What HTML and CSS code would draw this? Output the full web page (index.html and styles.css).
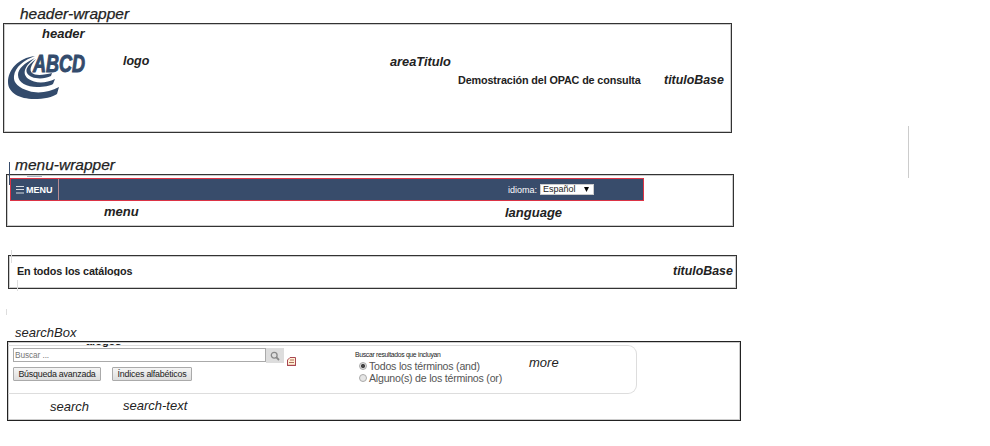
FILE: index.html
```
<!DOCTYPE html>
<html lang="es">
<head>
<meta charset="utf-8">
<title>OPAC</title>
<link rel="stylesheet" href="styles.css">
</head>
<body>
<main class="page">
  <section class="header-section">
    <h2 class="section-label header-wrapper-label">header-wrapper</h2>
    <div class="frame header-frame">
      <span class="note note-header">header</span>
      <div class="header-row">
        <svg class="brand" width="79" height="46" viewBox="0 0 79 46">
          <g fill="#334b6c">
            <path d="M27 1C10 3 0 15 0 27c0 11 12 17 26 17 10 0 19-2 23-5l2-7c-9 5-21 7-30 4C11 33 5 28 6 21 7 12 16 5 27 1Z"/>
            <path d="M27 3C16 8 10 14 10 20c0 8 9 12 19 12 7 0 13-1 16-3l2-5c-7 3.500-15 4.500-21 2.500C12 22 15 12 27 3Z"/>
            <path d="M28 4C20 10 17 14 19 18c3 6 16 7 24 3l1-3c-7 2-17 3-20 0-3-3-1-8 4-14Z"/>
          </g>
          <text class="brand-text" x="25" y="17" textLength="52" lengthAdjust="spacingAndGlyphs">ABCD</text>
        </svg>
        <span class="note note-logo">logo</span>
        <span class="note note-area">areaTitulo</span>
        <h1 class="base-title">Demostración del OPAC de consulta</h1>
        <span class="note note-base">tituloBase</span>
      </div>
    </div>
  </section>

  <section class="menu-section">
    <h2 class="section-label menu-wrapper-label">menu-wrapper</h2>
    <div class="frame menu-frame">
      <nav class="menu-bar">
        <div class="menu-button">
          <svg width="8" height="8" viewBox="0 0 8 8"><path d="M0 .5h8M0 3.500h8M0 7h8" stroke="#fff" stroke-width=".8"/></svg>
          <span>MENU</span>
        </div>
        <label class="language"><span class="language-label">idioma:</span><span class="select"><span>Español</span><svg width="5" height="5" viewBox="0 0 5 5"><path d="M0 0h5L2.500 5Z"/></svg></span></label>
      </nav>
      <div class="menu-notes">
        <span class="note note-menu">menu</span>
        <span class="note note-language">language</span>
      </div>
    </div>
  </section>

  <section class="frame catalog-frame">
    <h3 class="catalog-title">En todos los catálogos</h3>
    <span class="note note-catalog">tituloBase</span>
  </section>

  <section class="search-section">
    <h2 class="light-note search-box-label">searchBox</h2>
    <div class="frame search-frame">
      <div class="search-panel">
        <div class="search-column">
          <div class="search-line">
            <span class="search-input">Buscar ...</span>
            <span class="search-button"><svg width="10" height="10" viewBox="0 0 10 10" fill="none" stroke="#888"><circle cx="4.200" cy="4.200" r="2.900" stroke-width="1.300"/><path d="m6.200 6.200 2.800 2.800" stroke-width="1.800"/></svg></span>
            <svg class="doc" width="9" height="9" viewBox="0 0 9 9"><path d="M3 .5h5.500v8h-8V3Z" fill="#fff0d5" stroke="#a94652"/><path d="M3 3h4M2 5.500h5" stroke="#b0705c"/><path d="M0 8.300h9" stroke="#a94652"/></svg>
          </div>
          <div class="button-line">
            <span class="button advanced">Búsqueda avanzada</span>
            <span class="button indexes">Índices alfabéticos</span>
          </div>
        </div>
        <div class="options">
          <p class="options-title">Buscar resultados que incluyan</p>
          <p class="option"><i class="radio checked"></i><span class="option-and">Todos los términos (and)</span></p>
          <p class="option"><i class="radio"></i><span class="option-or">Alguno(s) de los términos (or)</span></p>
        </div>
        <span class="light-note note-more">more</span>
      </div>
      <div class="search-notes">
        <span class="light-note note-search">search</span>
        <span class="light-note note-search-text">search-text</span>
      </div>
      <span class="clipped-title">álogos</span>
    </div>
  </section>
</main>
<i class="mark mark-right"></i>
<i class="mark mark-menu"></i>
<i class="mark mark-dash"></i>
<i class="mark mark-catalog-top"></i>
<i class="mark mark-catalog-bottom"></i>
<i class="mark mark-search"></i>
</body>
</html>
```
FILE: styles.css
```
* { box-sizing: border-box; }
body { margin: 0; background: #fff; color: #222; font-family: "Liberation Sans", Arial, sans-serif; position: relative; height: 446px; overflow: hidden; }
h1, h2, h3, p { margin: 0; }
svg { display: block; flex: none; }
span { white-space: nowrap; }
.page { width: 745px; }
.frame { border: 1px solid #333; box-shadow: inset 0 0 0 1px #ccc; }
.section-label { font-size: 15.5px; font-weight: normal; font-style: italic; line-height: 18px; -webkit-text-stroke: .25px #222; }
.note { font-size: 13px; font-weight: bold; font-style: italic; line-height: 14px; flex: none; }
.light-note { font-size: 13px; font-weight: normal; font-style: italic; line-height: 14px; flex: none; }

.header-section { padding-top: 5px; height: 133px; }
.header-wrapper-label { margin-left: 20px; }
.header-frame { margin-left: 3px; width: 729px; height: 110px; padding-top: 3px; }
.note-header { display: block; margin-left: 38px; }
.header-row { display: flex; align-items: flex-start; padding-left: 4px; }
.brand { margin-top: 14px; overflow: visible; }
.brand-text { font-size: 23px; font-weight: bold; font-style: italic; fill: #334b6c; stroke: #334b6c; stroke-width: 1px; }
.note-logo { margin: 13px 0 0 36px; width: 267px; font-size: 12.5px; }
.note-area { margin-top: 14px; width: 68px; font-size: 12.8px; }
.base-title { margin-top: 32px; width: 206px; font-size: 10.8px; letter-spacing: -.13px; line-height: 14px; white-space: nowrap; }
.note-base { margin-top: 32px; font-size: 12.4px; }

.menu-section { padding-top: 23px; height: 94px; }
.menu-wrapper-label { margin-left: 15px; }
.menu-frame { margin-left: 6px; width: 728px; height: 53px; padding: 3px 3px 0; }
.menu-bar { display: flex; width: 634px; height: 23px; border: 1px solid #dc3345; background: #384c6b; color: #fff; }
.menu-button { display: flex; align-items: center; gap: 2px; width: 48px; padding-left: 5px; border-right: 1px solid #b68b92; font-size: 9px; font-weight: bold; }
.language { display: flex; align-items: center; margin-left: 449px; font-size: 9px; height: 21px; }
.language-label { width: 32px; }
.select { display: flex; align-items: center; justify-content: space-between; width: 54px; height: 11px; padding: 0 4px 0 2px; background: #fff; border: 1px solid #ccc; color: #222; line-height: 9px; }
.menu-notes { display: flex; padding-top: 4px; }
.note-menu { margin-left: 94px; width: 401px; }
.note-language { padding-top: 1px; }

.catalog-frame { display: flex; margin: 28px 0 0 8px; width: 729px; height: 34px; padding: 8px 0 0 8px; }
.catalog-title { width: 656px; height: 14px; font-size: 10.8px; letter-spacing: -.13px; line-height: 14px; clip-path: inset(0 0 2px 0); }
.note-catalog { font-size: 12.4px; }

.search-section { padding-top: 37px; }
.search-box-label { margin-left: 15px; height: 15px; }
.search-frame { position: relative; margin-left: 7px; width: 734px; height: 80px; padding-top: 3px; border-color: #222; }
.search-panel { display: flex; width: 629px; height: 49px; border: 1px solid #ddd; border-width: 1px 1px 1px 0; border-radius: 0 9px 9px 0; padding: 2px 0 0 5px; }
.search-column { width: 342px; }
.search-line { display: flex; height: 19px; }
.search-input { width: 253px; height: 14px; border: 1px solid #aaa; color: #777; font-size: 8.3px; line-height: 13px; padding-left: 1px; letter-spacing: -.1px; }
.search-button { width: 18px; height: 15px; background: #ddd; display: flex; align-items: center; justify-content: center; }
.doc { margin: 9px 0 0 3px; }
.button-line { display: flex; gap: 11px; }
.button { height: 14px; border: 1px solid #aaa; border-radius: 1px; background: linear-gradient(#f5f5f5, #ddd); font-size: 8.9px; letter-spacing: -.22px; line-height: 13px; text-align: center; }
.advanced { width: 88px; }
.indexes { width: 80px; }
.options { width: 174px; color: #555; }
.options-title { font-size: 6.8px; letter-spacing: -.3px; line-height: 10px; margin-top: 2px; color: #222; white-space: nowrap; }
.option { display: flex; align-items: center; gap: 2px; padding-left: 4px; height: 12px; font-size: 10.6px; letter-spacing: -.22px; }
.radio { width: 8px; height: 8px; border-radius: 50%; border: 1px solid #aaa; background: #e5e5e5; }
.checked { background: radial-gradient(#444 0 1.7px, #ddd 2.4px); }
.note-more { margin-top: 8px; }
.search-notes { display: flex; padding-top: 6px; }
.note-search { margin-left: 42px; width: 73px; }
.note-search-text { margin-top: -1px; }
.clipped-title { position: absolute; left: 78px; top: -1px; width: 38px; height: 6px; clip-path: inset(3px 0 0 0); font-size: 11px; font-weight: bold; line-height: 0; }

.mark { position: absolute; width: 1px; background: #ddd; }
.mark-right { left: 908px; top: 126px; height: 52px; background: #ccc; }
.mark-menu { left: 9px; top: 162px; height: 23px; background: #384c6b; }
.mark-dash { left: 27px; top: 176px; width: 15px; height: 1px; background: #abb5c5; }
.mark-catalog-top { left: 11px; top: 250px; height: 13px; }
.mark-catalog-bottom { left: 17px; top: 280px; height: 11px; }
.mark-search { left: 6px; top: 309px; height: 6px; }
```
